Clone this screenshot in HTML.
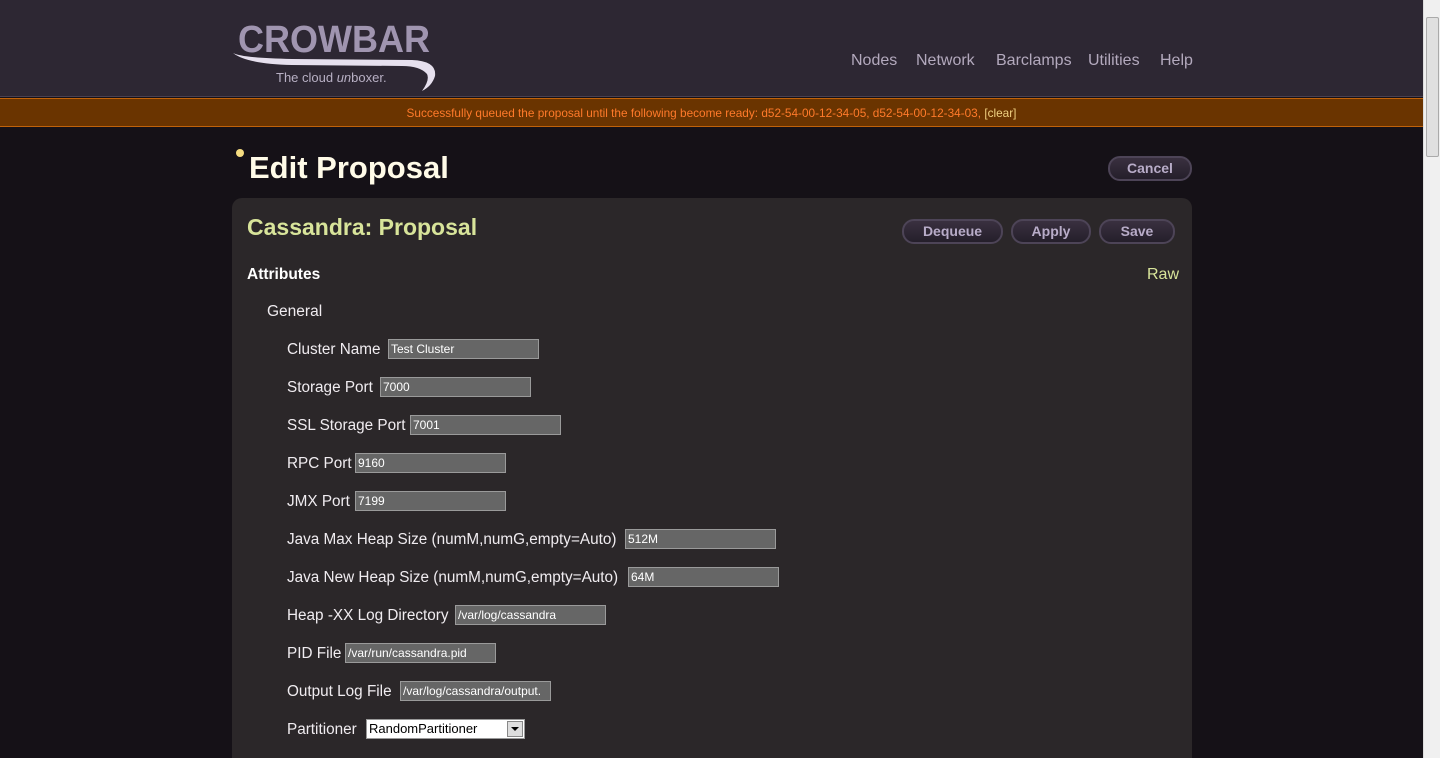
<!DOCTYPE html>
<html><head><meta charset="utf-8"><style>
*{box-sizing:border-box}
html,body{margin:0;width:1440px;height:758px;overflow:hidden}
body{background:#151117;font-family:"Liberation Sans",sans-serif;position:relative}
.hdr{position:absolute;left:0;top:0;width:1423px;height:97px;background:#2d2733;border-bottom:1px solid #4a4050}
.nav{position:absolute;top:52px;font-size:16px;color:#b3a9bd}
.ban{position:absolute;left:0;top:98px;width:1423px;height:29px;background:#6a3400;border-top:1px solid #c0620a;border-bottom:1px solid #c0620a;text-align:center;font-size:11.8px;line-height:28px;color:#ff7a2a}
.ban span{color:#f0d080}
.sb{position:absolute;right:0;top:0;width:17px;height:758px;background:#f0f0f0;border-left:1px solid #ddd}
.sb .th{position:absolute;left:2px;top:17px;width:13px;height:140px;background:#e0e0e0;border:1px solid #aaa;border-radius:2px}
h1{position:absolute;left:249px;top:150px;margin:0;font-size:31px;color:#fffbe8;font-weight:bold}
.dot{position:absolute;left:236px;top:149px;width:8px;height:8px;border-radius:50%;background:#f5dc80}
.btn{position:absolute;height:25px;border:2px solid #4d4457;border-radius:12px;background:linear-gradient(#3a3040,#251f2b);color:#b8acc8;font-weight:bold;font-size:14px;text-align:center;line-height:21px}
.panel{position:absolute;left:232px;top:198px;width:960px;height:560px;background:#2b2729;border-radius:10px 10px 0 0}
.t{position:absolute;white-space:nowrap}
.lbl{position:absolute;left:287px;font-size:15.3px;color:#f0ecf0;white-space:nowrap;margin-top:2px}
.in{position:absolute;height:20px;background:#666;border:1px solid #9a9a9a;color:#fff;font-size:12px;line-height:18px;padding-left:2px;white-space:nowrap;overflow:hidden}
</style></head><body>
<div class="hdr">
<svg style="position:absolute;left:232px;top:14px" width="210" height="80">
<text x="6" y="38" font-family="Liberation Sans" font-weight="bold" font-size="38" fill="#a095b0" textLength="192" lengthAdjust="spacingAndGlyphs">CROWBAR</text>
<path d="M1 39 Q10 44 60 45 L180 46 Q205 47 203 62 Q200 72 190 77 Q198 66 195 60 Q188 52 170 52 L60 51 Q15 50 1 39Z" fill="#e6e0ee"/>
<text x="44" y="68" font-family="Liberation Sans" font-size="13" fill="#b8b0c4">The cloud <tspan font-style="italic">un</tspan>boxer.</text>
</svg>
<div class="nav" style="left:851px">Nodes</div>
<div class="nav" style="left:916px">Network</div>
<div class="nav" style="left:996px">Barclamps</div>
<div class="nav" style="left:1088px">Utilities</div>
<div class="nav" style="left:1160px">Help</div>
</div>
<div class="ban">Successfully queued the proposal until the following become ready: d52-54-00-12-34-05, d52-54-00-12-34-03, <span>[clear]</span></div>
<div class="dot"></div>
<h1>Edit Proposal</h1>
<div class="btn" style="left:1108px;top:156px;width:84px">Cancel</div>
<div class="panel"></div>
<div class="t" style="left:247px;top:214px;font-size:23px;font-weight:bold;color:#d8e49a">Cassandra: Proposal</div>
<div class="btn" style="left:902px;top:219px;width:101px">Dequeue</div>
<div class="btn" style="left:1011px;top:219px;width:80px">Apply</div>
<div class="btn" style="left:1099px;top:219px;width:76px">Save</div>
<div class="t" style="left:247px;top:266px;font-size:15.5px;font-weight:bold;color:#fff">Attributes</div>
<div class="t" style="left:1147px;top:266px;font-size:16px;color:#d8e49a">Raw</div>
<div class="t" style="left:267px;top:303px;font-size:15.5px;color:#f0ecf0">General</div>

<div class="lbl" style="top:339px">Cluster Name</div><div class="in" style="left:388px;top:339px;width:151px">Test Cluster</div>
<div class="lbl" style="top:377px">Storage Port</div><div class="in" style="left:380px;top:377px;width:151px">7000</div>
<div class="lbl" style="top:415px">SSL Storage Port</div><div class="in" style="left:410px;top:415px;width:151px">7001</div>
<div class="lbl" style="top:453px">RPC Port</div><div class="in" style="left:355px;top:453px;width:151px">9160</div>
<div class="lbl" style="top:491px">JMX Port</div><div class="in" style="left:355px;top:491px;width:151px">7199</div>
<div class="lbl" style="top:529px">Java Max Heap Size (numM,numG,empty=Auto)</div><div class="in" style="left:625px;top:529px;width:151px">512M</div>
<div class="lbl" style="top:567px">Java New Heap Size (numM,numG,empty=Auto)</div><div class="in" style="left:628px;top:567px;width:151px">64M</div>
<div class="lbl" style="top:605px">Heap -XX Log Directory</div><div class="in" style="left:455px;top:605px;width:151px">/var/log/cassandra</div>
<div class="lbl" style="top:643px">PID File</div><div class="in" style="left:345px;top:643px;width:151px">/var/run/cassandra.pid</div>
<div class="lbl" style="top:681px">Output Log File</div><div class="in" style="left:400px;top:681px;width:151px">/var/log/cassandra/output.</div>
<div class="lbl" style="top:719px">Partitioner</div>
<div class="in" style="left:366px;top:719px;width:159px;background:#fff;color:#000;border-color:#999;font-size:13px">RandomPartitioner
<div style="position:absolute;right:1px;top:1px;width:16px;height:16px;background:#ddd;border:1px solid #888"><div style="position:absolute;left:3px;top:5px;border-left:4px solid transparent;border-right:4px solid transparent;border-top:4px solid #000"></div></div></div>
<div class="sb"><div class="th"></div></div>
</body></html>
